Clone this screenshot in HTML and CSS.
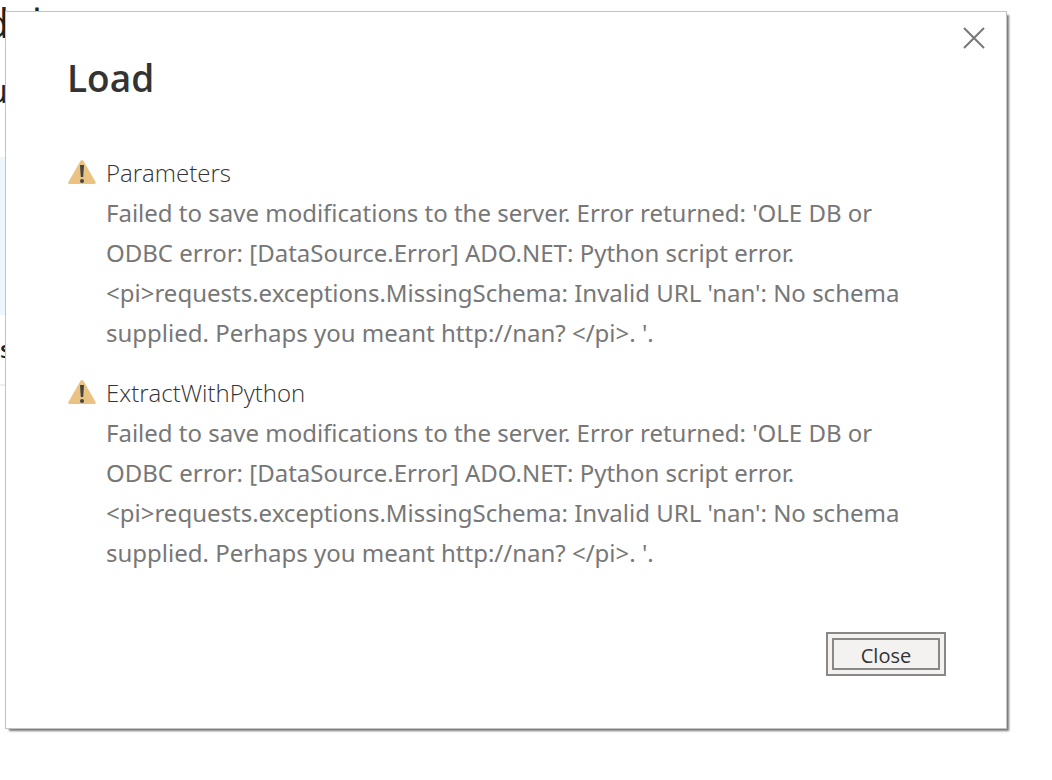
FILE: index.html
```
<!DOCTYPE html>
<html lang="en">
<head>
    <meta charset="UTF-8">
    <meta name="viewport" content="width=device-width, initial-scale=1.0">
    <title>Load</title>
    <link rel="stylesheet" href="styles.css">
</head>
<body>
    <!-- Page behind the dialog -->
    <div class="backdrop" aria-hidden="true">
        <div class="page-title">dal</div>
        <div class="page-text">u</div>
        <div class="page-band"></div>
        <div class="page-label">s</div>
    </div>

    <div class="dialog" role="dialog" aria-labelledby="dialogTitle">
        <button class="dismiss" type="button" aria-label="Dismiss">
            <svg width="24" height="24" viewBox="0 0 24 24" fill="none" stroke="#777" stroke-width="2">
                <path d="M2 2 L22 22 M22 2 L2 22"/>
            </svg>
        </button>

        <h1 id="dialogTitle">Load</h1>

        <div class="errors">
            <div class="error">
                <svg class="warning" width="28" height="24" viewBox="0 0 28 24">
                    <path fill="#eac282" d="M12.6 0.8 Q14 -0.8 15.4 0.8 L27.6 22 Q28.2 24 26.4 24 H1.6 Q-0.2 24 0.4 22 Z"/>
                    <path fill="#444" d="M12 5 H16 L15.2 17 H12.8 Z"/>
                    <circle fill="#444" cx="14" cy="21" r="2"/>
                </svg>
                <div class="error-body">
                    <h2>Parameters</h2>
                    <p>Failed to save modifications to the server. Error returned: 'OLE DB or ODBC error: [DataSource.Error] ADO.NET: Python script error. &lt;pi&gt;requests.exceptions.MissingSchema: Invalid URL 'nan': No schema supplied. Perhaps you meant http://nan? &lt;/pi&gt;. '.</p>
                </div>
            </div>

            <div class="error">
                <svg class="warning" width="28" height="24" viewBox="0 0 28 24">
                    <path fill="#eac282" d="M12.6 0.8 Q14 -0.8 15.4 0.8 L27.6 22 Q28.2 24 26.4 24 H1.6 Q-0.2 24 0.4 22 Z"/>
                    <path fill="#444" d="M12 5 H16 L15.2 17 H12.8 Z"/>
                    <circle fill="#444" cx="14" cy="21" r="2"/>
                </svg>
                <div class="error-body">
                    <h2>ExtractWithPython</h2>
                    <p>Failed to save modifications to the server. Error returned: 'OLE DB or ODBC error: [DataSource.Error] ADO.NET: Python script error. &lt;pi&gt;requests.exceptions.MissingSchema: Invalid URL 'nan': No schema supplied. Perhaps you meant http://nan? &lt;/pi&gt;. '.</p>
                </div>
            </div>
        </div>

        <div class="actions">
            <button class="close" type="button">Close</button>
        </div>
    </div>
</body>
</html>
```
FILE: styles.css
```
* {
    box-sizing: border-box;
}

body {
    margin: 0;
    padding: 11px 45px 50px 5px;
    background-color: #fff;
    font-family: "Segoe UI", "Open Sans", "Noto Sans", sans-serif;
}

/* Page behind the dialog, only its left edge shows */
.backdrop {
    position: absolute;
    top: 0;
    left: 0;
    width: 60px;
    height: 386px;
    overflow: hidden;
    color: #222;
    border-bottom: 2px solid #eee;
}

.page-title {
    margin-left: -16px;
    height: 70px;
    font-size: 41px;
    line-height: 44px;
}

.page-text {
    margin-left: -12px;
    height: 87px;
    font-size: 32px;
    line-height: 42px;
}

.page-band {
    height: 158px;
    background-color: #edf5fd;
}

.page-label {
    font-size: 24px;
    font-weight: 600;
    line-height: 68px;
}

.dialog {
    position: relative;
    padding: 42px 60px 52px 61px;
    background-color: #fff;
    border: 1px solid #c3c3c3;
    box-shadow: 3px 3px 2px -1px #777;
}

.dismiss {
    position: absolute;
    top: 14px;
    right: 20px;
    width: 24px;
    height: 24px;
    padding: 0;
    border: none;
    background: none;
    cursor: pointer;
}

.dismiss svg {
    display: block;
}

h1 {
    margin: 0;
    color: #333;
    font-size: 37px;
    font-weight: 600;
    line-height: 48px;
}

.errors {
    display: flex;
    flex-direction: column;
    gap: 20px;
    margin-top: 51px;
    padding: 0 20px 0 1px;
}

.error {
    display: flex;
    gap: 10px;
}

.warning {
    flex: none;
    margin-top: 7px;
}

h2 {
    margin: 0;
    color: #333;
    font-size: 24px;
    font-weight: 300;
    line-height: 40px;
}

p {
    margin: 0;
    color: #777;
    font-family: "Segoe UI", "Noto Sans", "Open Sans", sans-serif;
    font-size: 24px;
    line-height: 40px;
}

.actions {
    display: flex;
    justify-content: flex-end;
    margin-top: 59px;
}

.close {
    width: 120px;
    height: 44px;
    padding: 3px 0 0;
    border: 2px solid #8a8886;
    outline: 2px solid #8a8886;
    outline-offset: -8px;
    background-color: #f3f2f1;
    color: #333;
    font-family: inherit;
    font-size: 20px;
    cursor: pointer;
}
```
